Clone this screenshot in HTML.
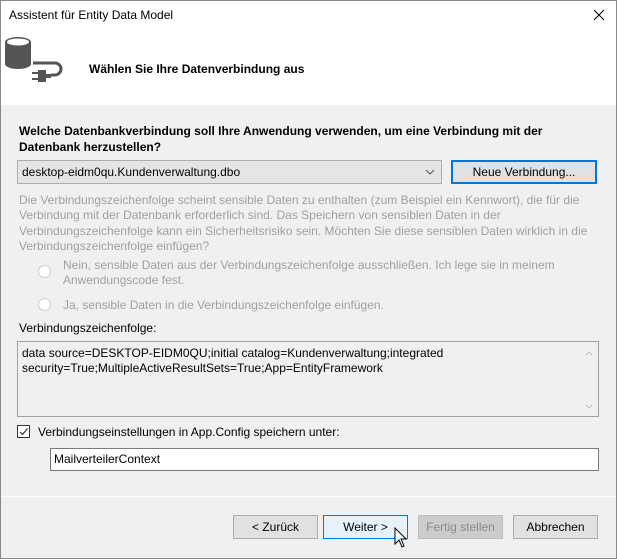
<!DOCTYPE html>
<html><head><meta charset="utf-8"><style>
*{margin:0;padding:0;box-sizing:border-box}
body{width:617px;height:559px;overflow:hidden;background:#f0f0f0;font-family:"Liberation Sans",sans-serif;font-size:12px;color:#000;position:relative}
.a{position:absolute;white-space:nowrap}
.win{position:absolute;left:0;top:0;width:617px;height:559px;border:1px solid #8a8a8a}
.btn{position:absolute;height:24px;border:1px solid #adadad;background:#e1e1e1;text-align:center;line-height:22px}
.g{color:#a0a0a0}
</style></head><body>
<div class="a" style="left:0;top:0;width:617px;height:105px;background:#fff"></div>
<div class="a" style="left:9px;top:8px">Assistent für Entity Data Model</div>
<svg class="a" style="left:592px;top:8px" width="14" height="14"><path d="M2 2L12 12M12 2L2 12" stroke="#000" stroke-width="1"/></svg>
<svg class="a" style="left:3px;top:36px" width="64" height="50">
<ellipse cx="15" cy="6" rx="13" ry="5" fill="#555"/>
<rect x="2" y="6" width="26" height="22" fill="#555"/>
<ellipse cx="15" cy="28" rx="13" ry="5" fill="#555"/>
<ellipse cx="15" cy="6" rx="11" ry="3.5" fill="#fff"/>
<path d="M30 27H52a6 6 0 0 1 0 12H48" fill="none" stroke="#555" stroke-width="3"/>
<path d="M35 34h8v12h-8z M43 38h5v4h-5z" fill="#555"/>
<rect x="29" y="36" width="6" height="2" fill="#555"/><rect x="29" y="42" width="6" height="2" fill="#555"/>
</svg>
<div class="a" style="left:89px;top:62px;font-weight:bold">Wählen Sie Ihre Datenverbindung aus</div>
<div class="a" style="left:19px;top:123px;font-weight:bold;line-height:16px">Welche Datenbankverbindung soll Ihre Anwendung verwenden, um eine Verbindung mit der<br>Datenbank herzustellen?</div>
<div class="a" style="left:17px;top:160px;width:425px;height:24px;border:1px solid #adadad;background:#e5e5e5;padding:4px 4px;line-height:14px">desktop-eidm0qu.Kundenverwaltung.dbo</div>
<svg class="a" style="left:425px;top:169px" width="10" height="7"><path d="M1 1L5 5L9 1" fill="none" stroke="#555"/></svg>
<div class="btn" style="left:451px;top:160px;width:146px;border:2px solid #0078d7;line-height:20px">Neue Verbindung...</div>
<div class="a g" style="left:19px;top:193px;line-height:15.3px">Die Verbindungszeichenfolge scheint sensible Daten zu enthalten (zum Beispiel ein Kennwort), die für die<br>Verbindung mit der Datenbank erforderlich sind. Das Speichern von sensiblen Daten in der<br>Verbindungszeichenfolge kann ein Sicherheitsrisiko sein. Möchten Sie diese sensiblen Daten wirklich in die<br>Verbindungszeichenfolge einfügen?</div>
<div class="a" style="left:38px;top:265px;width:13px;height:13px;border:1px solid #ccc;border-radius:50%;background:#fff"></div>
<div class="a g" style="left:63px;top:258px;line-height:15px">Nein, sensible Daten aus der Verbindungszeichenfolge ausschließen. Ich lege sie in meinem<br>Anwendungscode fest.</div>
<div class="a" style="left:38px;top:298px;width:13px;height:13px;border:1px solid #ccc;border-radius:50%;background:#fff"></div>
<div class="a g" style="left:63px;top:298px">Ja, sensible Daten in die Verbindungszeichenfolge einfügen.</div>
<div class="a" style="left:19px;top:321px">Verbindungszeichenfolge:</div>
<div class="a" style="left:17px;top:341px;width:582px;height:76px;border:1px solid #a0a0a0;background:#f0f0f0;padding:4px 4px;line-height:15px">data source=DESKTOP-EIDM0QU;initial catalog=Kundenverwaltung;integrated<br>security=True;MultipleActiveResultSets=True;App=EntityFramework</div>
<svg class="a" style="left:584px;top:350px" width="10" height="60"><path d="M2 5L5 2L8 5M2 55L5 58L8 55" fill="none" stroke="#c0c0c0"/></svg>
<div class="a" style="left:17px;top:425px;width:13px;height:13px;border:1px solid #333;background:#fff"></div>
<svg class="a" style="left:18px;top:426px" width="11" height="11"><path d="M2 6L4.5 8.5L9.5 2.5" fill="none" stroke="#333" stroke-width="1.2"/></svg>
<div class="a" style="left:38px;top:425px">Verbindungseinstellungen in App.Config speichern unter:</div>
<div class="a" style="left:50px;top:448px;width:549px;height:23px;border:1px solid #7a7a7a;background:#fff;padding:3px 3px;line-height:15px">MailverteilerContext</div>
<div class="a" style="left:1px;top:496px;width:615px;height:1px;background:#fff"></div>
<div class="btn" style="left:233px;top:515px;width:85px">&lt; Zurück</div>
<div class="btn" style="left:323px;top:515px;width:85px;border-color:#0078d7;background:#e5f1fb">Weiter &gt;</div>
<div class="btn g" style="left:418px;top:515px;width:85px;border-color:#bfbfbf;background:#ccc;color:#8a8a8a">Fertig stellen</div>
<div class="btn" style="left:513px;top:515px;width:85px">Abbrechen</div>
<svg class="a" style="left:394px;top:527px" width="14" height="22"><path d="M1 1V17L5 13L8 20L10 19L7 12H12Z" fill="#fff" stroke="#000"/></svg>
<div class="win"></div>
</body></html>
